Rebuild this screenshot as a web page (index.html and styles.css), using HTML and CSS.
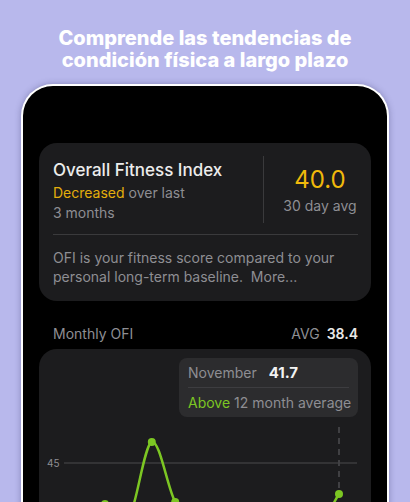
FILE: index.html
```html
<!DOCTYPE html>
<html lang="es">
<head>
    <meta charset="UTF-8">
    <meta name="viewport" content="width=device-width, initial-scale=1.0">
    <title>Overall Fitness Index</title>
    <link rel="stylesheet" href="styles.css">
</head>
<body>
    <h1 class="headline">Comprende las tendencias de<br>condición física a largo plazo</h1>

    <div class="phone">
        <div class="card summary">
            <div class="summary-top">
                <div class="summary-left">
                    <div class="title">Overall Fitness Index</div>
                    <div class="muted sub"><span class="gold">Decreased</span> over last</div>
                    <div class="muted sub">3 months</div>
                </div>
                <div class="vdivider"></div>
                <div class="summary-right">
                    <div class="score">40.0</div>
                    <div class="muted">30 day avg</div>
                </div>
            </div>
            <div class="hdivider"></div>
            <p class="desc">OFI is your fitness score compared to your personal long-term baseline.&nbsp; More...</p>
        </div>

        <div class="section-head">
            <span>Monthly OFI</span>
            <span>AVG <b class="avg">38.4</b></span>
        </div>

        <div class="card chart">
            <div class="tip-row">
                <div class="tip">
                    <div class="tip-line"><span class="muted">November</span><b class="tip-val">41.7</b></div>
                    <div class="tip-sep"></div>
                    <div class="tip-line"><span class="green">Above</span>&nbsp;<span class="muted">12 month average</span></div>
                </div>
            </div>
            <svg class="plot" width="332" height="100" viewBox="0 0 332 100">
                <line x1="25" y1="46" x2="318" y2="46" stroke="#4a4a4d" stroke-width="1.2"/>
                <text x="8" y="50" fill="#8e8e93" font-size="10" font-family="Inter, sans-serif">45</text>
                <line x1="300" y1="10" x2="300" y2="77" stroke="#404043" stroke-width="2" stroke-dasharray="6 5"/>
                <path d="M 42.6 104 C 50 100, 58 86, 66 87 C 74 96, 82 104, 89.4 102 C 97.2 91.7, 105 27.8, 112.8 25 C 120.6 22.2, 128.4 70.8, 136.2 85 C 144 99, 152 112, 159.6 114 C 200 118, 240 118, 276.6 112 C 284.4 106.5, 296.1 82.8, 300 77" fill="none" stroke="#7cc623" stroke-width="2.5" stroke-linecap="round"/>
                <circle cx="66" cy="87" r="4" fill="#7cc623"/>
                <circle cx="112.8" cy="25" r="4" fill="#7cc623"/>
                <circle cx="136.2" cy="85" r="4" fill="#7cc623"/>
                <circle cx="300" cy="77" r="4" fill="#7cc623"/>
            </svg>
        </div>
    </div>
</body>
</html>
```

FILE: styles.css
```css
body {
    margin: 0;
    height: 502px;
    overflow: hidden;
    background: #b8b8ec;
    font-family: Inter, "Noto Sans", sans-serif;
}

.headline {
    margin: 27px 0 0;
    text-align: center;
    color: #fff;
    font-size: 20px;
    font-weight: 800;
    line-height: 22px;
}

.phone {
    margin: 13px 21px 0;
    height: 460px;
    padding: 57px 16px 0;
    background: #000;
    border: 2px solid #fff;
    border-bottom: none;
    border-radius: 32px 32px 0 0;
    box-shadow: 0 0 6px rgba(40, 40, 90, 0.35);
}

.card {
    background: #1c1c1e;
    border-radius: 18px;
}

.summary {
    padding: 16px 13px 15px 14px;
}

.summary-top {
    display: flex;
    align-items: stretch;
}

.summary-left {
    flex: 1;
}

.title {
    color: #ececec;
    font-size: 17px;
    line-height: 22px;
    font-weight: 500;
}

.muted {
    color: #8e8e93;
    font-size: 14px;
    line-height: 21px;
}

.sub {
    line-height: 20px;
}

.summary-left .title + .sub {
    margin-top: 2px;
}

.gold {
    color: #e3ae0c;
}

.green {
    color: #7cc623;
}

.vdivider {
    width: 1px;
    background: #3a3a3c;
    margin: -3px 0 0;
}

.summary-right {
    width: 76px;
    padding-left: 18px;
    text-align: center;
}

.score {
    color: #f0b90b;
    font-size: 24px;
    line-height: 30px;
    margin-top: 6px;
}

.hdivider {
    height: 1px;
    background: #3a3a3c;
    margin: 11px 0 0;
}

.desc {
    margin: 13px 0 0;
    color: #8e8e93;
    font-size: 14px;
    line-height: 19px;
}

.section-head {
    display: flex;
    justify-content: space-between;
    padding: 0 13px 0 14px;
    margin: 23px 0 5px;
    color: #8e8e93;
    font-size: 14px;
    line-height: 20px;
}

.avg {
    color: #e8e8e8;
    font-weight: 600;
    margin-left: 3px;
}

.chart {
    height: 200px;
    overflow: hidden;
}

.tip-row {
    display: flex;
    justify-content: flex-end;
    padding: 9px 13px 0;
}

.tip {
    width: 161px;
    padding: 0 9px;
    background: #2c2c2e;
    border-radius: 8px;
}

.tip-line {
    font-size: 14px;
    line-height: 29px;
    white-space: nowrap;
}

.tip-val {
    color: #f2f2f2;
    font-weight: 700;
    font-size: 15px;
    margin-left: 12px;
}

.tip-sep {
    height: 1px;
    background: #3d3d40;
}

.plot {
    display: block;
}
```
